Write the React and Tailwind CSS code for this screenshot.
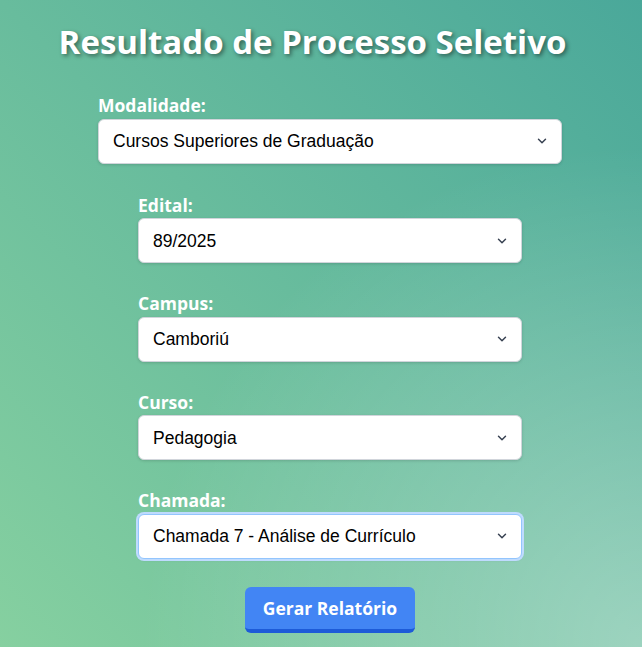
import { ChevronDown } from 'lucide-react';

const fields = [
  { label: 'Edital:', value: '89/2025' },
  { label: 'Campus:', value: 'Camboriú' },
  { label: 'Curso:', value: 'Pedagogia' },
  { label: 'Chamada:', value: 'Chamada 7 - Análise de Currículo', focused: true },
];

const Select = ({ value, focused }) => (
  <div
    className={`relative flex items-center h-[45px] rounded-md bg-white shadow-[0_1px_3px_rgba(0,0,0,0.15)] border ${
      focused ? 'border-[#93c5fd] ring-2 ring-[#bfdbfe]' : 'border-[#d1d5db]'
    }`}
  >
    <span className="pl-[14px] text-[17.5px] text-black font-['Liberation_Sans',Arial,sans-serif]">{value}</span>
    <ChevronDown size={14} strokeWidth={2.5} className="absolute right-[12px] text-[#374151]" />
  </div>
);

const Label = ({ children }) => (
  <div className="text-[17.5px] font-bold text-white leading-none mb-[4px] font-['Open_Sans',sans-serif]">{children}</div>
);

export default function App() {
  return (
    <div className="min-h-[647px] w-full bg-[radial-gradient(circle_at_100%_100%,rgba(255,255,255,0.35),transparent_55%),linear-gradient(to_bottom_left,#4aa89a,#86d0a0)] flex flex-col items-center pt-[21px]">
      <h1 className="mr-[17px] text-[33px] font-bold text-white font-['Open_Sans',sans-serif] [text-shadow:2px_2px_4px_rgba(0,0,0,0.45)] leading-tight">
        Resultado de Processo Seletivo
      </h1>

      <div className="ml-[18px] flex flex-col items-center">
        <div className="w-[464px] mt-[35px]">
          <Label>Modalidade:</Label>
          <Select value="Cursos Superiores de Graduação" />
        </div>

        <div className="w-[384px] flex flex-col gap-[32px] mt-[33px]">
          {fields.map((f) => (
            <div key={f.label}>
              <Label>{f.label}</Label>
              <Select value={f.value} focused={f.focused} />
            </div>
          ))}
        </div>

        <button className="mt-[28px] w-[170px] h-[46px] rounded-md bg-[#4285f4] border-b-4 border-[#1d5bd8] text-white text-[17.5px] font-bold font-['Open_Sans',sans-serif]">
          Gerar Relatório
        </button>
      </div>
    </div>
  );
}
